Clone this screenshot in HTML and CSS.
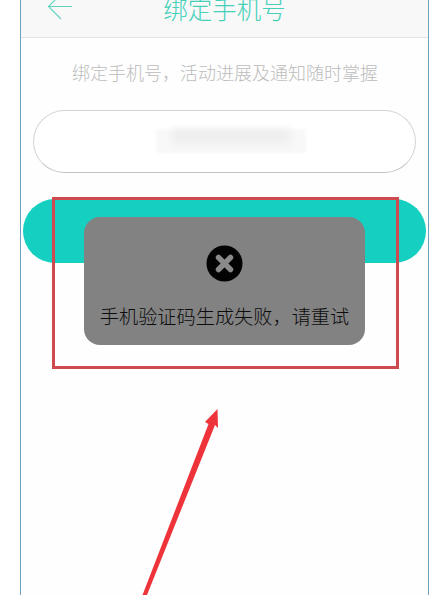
FILE: index.html
```html
<!DOCTYPE html>
<html lang="zh-CN">
<head>
<meta charset="utf-8">
<title>绑定手机号</title>
<link rel="stylesheet" href="styles.css">
</head>
<body>
<main class="phone">
  <header class="topbar">
    <svg class="back" width="26" height="22" viewBox="0 0 26 22" aria-hidden="true"><path d="M25 10.500H2M14 -2L1.500 10.500L14 23" fill="none" stroke="#5fd3be" stroke-width="1.100"/></svg>
    <h1 class="title">绑定手机号</h1>
  </header>
  <p class="hint">绑定手机号，活动进展及通知随时掌握</p>
  <div class="field"><span class="masked"><span class="masked-core"></span></span></div>
  <button class="submit" type="button"></button>
</main>
<div class="toast">
  <svg class="toast-icon" width="37" height="37" viewBox="0 0 37 37" aria-hidden="true"><circle cx="18.500" cy="18.500" r="18" fill="#030303"/><path d="M12.500 12.500L24.500 24.500M24.500 12.500L12.500 24.500" stroke="#8a8a8a" stroke-width="5.500" stroke-linecap="round"/></svg>
  <p class="toast-text">手机验证码生成失败，请重试</p>
</div>
<div class="highlight"></div>
<svg class="arrow" width="431" height="595" viewBox="0 0 431 595" aria-hidden="true"><path d="M217.500 409L218 428L215 425L147 595H142.500L208.500 424L205 422Z" fill="#ee343a"/></svg>
</body>
</html>
```
FILE: styles.css
```css
* { box-sizing: border-box; }
html, body { margin: 0; height: 100%; overflow: hidden; background: #fff; }
body { position: relative; font-family: "Noto Sans CJK SC", "Noto Sans", sans-serif; }
.phone {
  width: 409px; height: 595px; margin-left: 20px;
  border-left: 1px solid #6fa3bd; border-right: 1px solid #6fa3bd;
  background: #fefefe;
  display: flex; flex-direction: column;
}
.topbar {
  position: relative; height: 38px; flex: none;
  background: #f8f8f8; border-bottom: 1px solid #dfe3e4;
  display: flex; justify-content: center; align-items: flex-end;
}
.back { position: absolute; left: 26px; top: -4px; overflow: visible; }
.title { margin: 0 0 16px; font-size: 24.500px; line-height: 24px; font-weight: 300; color: #45d0b8; }
.hint { margin: 21px 0 0; font-size: 18px; line-height: 26px; font-weight: 300; color: #bcbcbc; text-align: center; padding-left: 1px; white-space: nowrap; }
.field {
  margin: 25px 12px 0; height: 63px; flex: none;
  border: 1px solid #d0d5d5; border-bottom-color: #bfc4c4; border-radius: 32px; background: #fff;
  position: relative;
}
.masked { position: absolute; left: 122px; top: 18px; width: 150px; height: 24px; background: #f8f8f8; filter: blur(1.500px); }
.masked-core { display: block; margin: 0 0 0 16px; width: 118px; height: 15px; background: #eeeeee; filter: blur(3px); }
.submit {
  display: block; margin: 26px 2px 0; height: 64px; flex: none; padding: 0;
  border: 0; border-radius: 32px; background: #15d0c0;
}
.toast {
  position: absolute; left: 84px; top: 217px; width: 281px; height: 128px;
  border-radius: 16px; background: #828282;
  display: flex; flex-direction: column; align-items: center;
}
.toast-icon { margin-top: 28px; flex: none; }
.toast-text { margin: 21px 0 0; font-size: 19.200px; line-height: 26px; font-weight: 300; color: #0c0c0c; white-space: nowrap; }
.highlight {
  position: absolute; left: 52px; top: 197px; width: 347px; height: 172px;
  border: 3px solid #cf4a4e;
}
.arrow { position: absolute; left: 0; top: 0; pointer-events: none; }
```
